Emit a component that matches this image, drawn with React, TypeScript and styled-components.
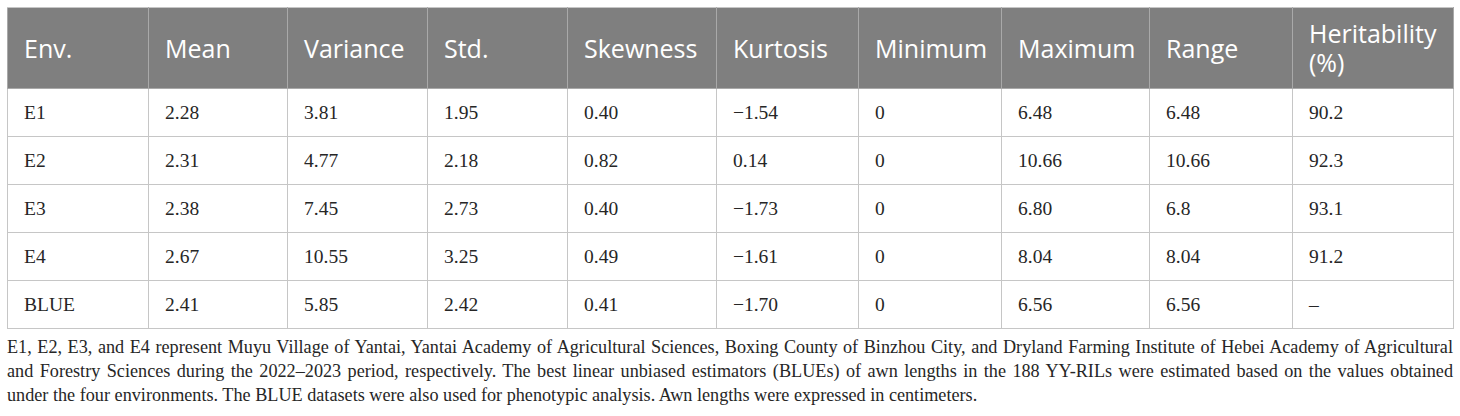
import styled, { createGlobalStyle } from 'styled-components'

const GlobalStyle = createGlobalStyle`
  body {
    margin: 0;
    background: #ffffff;
  }
`

const columns = [
  { label: 'Env.', width: 141 },
  { label: 'Mean', width: 139 },
  { label: 'Variance', width: 140 },
  { label: 'Std.', width: 140 },
  { label: 'Skewness', width: 149 },
  { label: 'Kurtosis', width: 142 },
  { label: 'Minimum', width: 143 },
  { label: 'Maximum', width: 148 },
  { label: 'Range', width: 143 },
  { label: 'Heritability (%)', width: 161 },
]

const rows = [
  ['E1', '2.28', '3.81', '1.95', '0.40', '−1.54', '0', '6.48', '6.48', '90.2'],
  ['E2', '2.31', '4.77', '2.18', '0.82', '0.14', '0', '10.66', '10.66', '92.3'],
  ['E3', '2.38', '7.45', '2.73', '0.40', '−1.73', '0', '6.80', '6.8', '93.1'],
  ['E4', '2.67', '10.55', '3.25', '0.49', '−1.61', '0', '8.04', '8.04', '91.2'],
  ['BLUE', '2.41', '5.85', '2.42', '0.41', '−1.70', '0', '6.56', '6.56', '–'],
]

// footnote lines, broken where the reference breaks them
const notes = [
  'E1, E2, E3, and E4 represent Muyu Village of Yantai, Yantai Academy of Agricultural Sciences, Boxing County of Binzhou City, and Dryland Farming Institute of Hebei Academy of Agricultural',
  'and Forestry Sciences during the 2022–2023 period, respectively. The best linear unbiased estimators (BLUEs) of awn lengths in the 188 YY-RILs were estimated based on the values obtained',
  'under the four environments. The BLUE datasets were also used for phenotypic analysis. Awn lengths were expressed in centimeters.',
]

export default function App() {
  return (
    <Page>
      <GlobalStyle />
      <Table>
        <colgroup>
          {columns.map((c) => (
            <col key={c.label} style={{ width: c.width }} />
          ))}
        </colgroup>
        <thead>
          <tr>
            {columns.map((c) => (
              <HeadCell key={c.label}>{c.label}</HeadCell>
            ))}
          </tr>
        </thead>
        <tbody>
          {rows.map((r) => (
            <tr key={r[0]}>
              {r.map((v, i) => (
                <Cell key={i}>{v}</Cell>
              ))}
            </tr>
          ))}
        </tbody>
      </Table>
      <Footnote>
        {notes.map((line, i) => (
          <NoteLine key={i} $last={i === notes.length - 1}>
            {line}
          </NoteLine>
        ))}
      </Footnote>
    </Page>
  )
}

const Page = styled.div`
  width: 1446px;
  padding: 7px 0 0 7px;
`

const Table = styled.table`
  width: 1446px;
  table-layout: fixed;
  border-collapse: collapse;
  border: 1px solid #c6c6c6;
`

const HeadCell = styled.th`
  height: 80px;
  padding: 0 16px;
  background: #7f7f7f;
  color: #ffffff;
  border: 1px solid #a9a9a9;
  border-top-color: #c6c6c6;
  text-align: left;
  vertical-align: middle;
  font-family: 'Open Sans', 'Noto Sans', sans-serif;
  font-weight: 400;
  font-size: 25px;
  line-height: 29px;
`

const Cell = styled.td`
  height: 47px;
  padding: 0 16px;
  border: 1px solid #c6c6c6;
  color: #262626;
  vertical-align: middle;
  font-family: 'Liberation Serif', 'DejaVu Serif', serif;
  font-size: 19.5px;
`

const Footnote = styled.div`
  margin-top: 6px;
  width: 1446px;
  color: #262626;
  font-family: 'Liberation Serif', 'DejaVu Serif', serif;
  font-size: 18.2px;
  line-height: 24px;
`

const NoteLine = styled.div<{ $last: boolean }>`
  text-align: ${(p) => (p.$last ? 'left' : 'justify')};
  text-align-last: ${(p) => (p.$last ? 'left' : 'justify')};
  white-space: ${(p) => (p.$last ? 'nowrap' : 'normal')};
`
